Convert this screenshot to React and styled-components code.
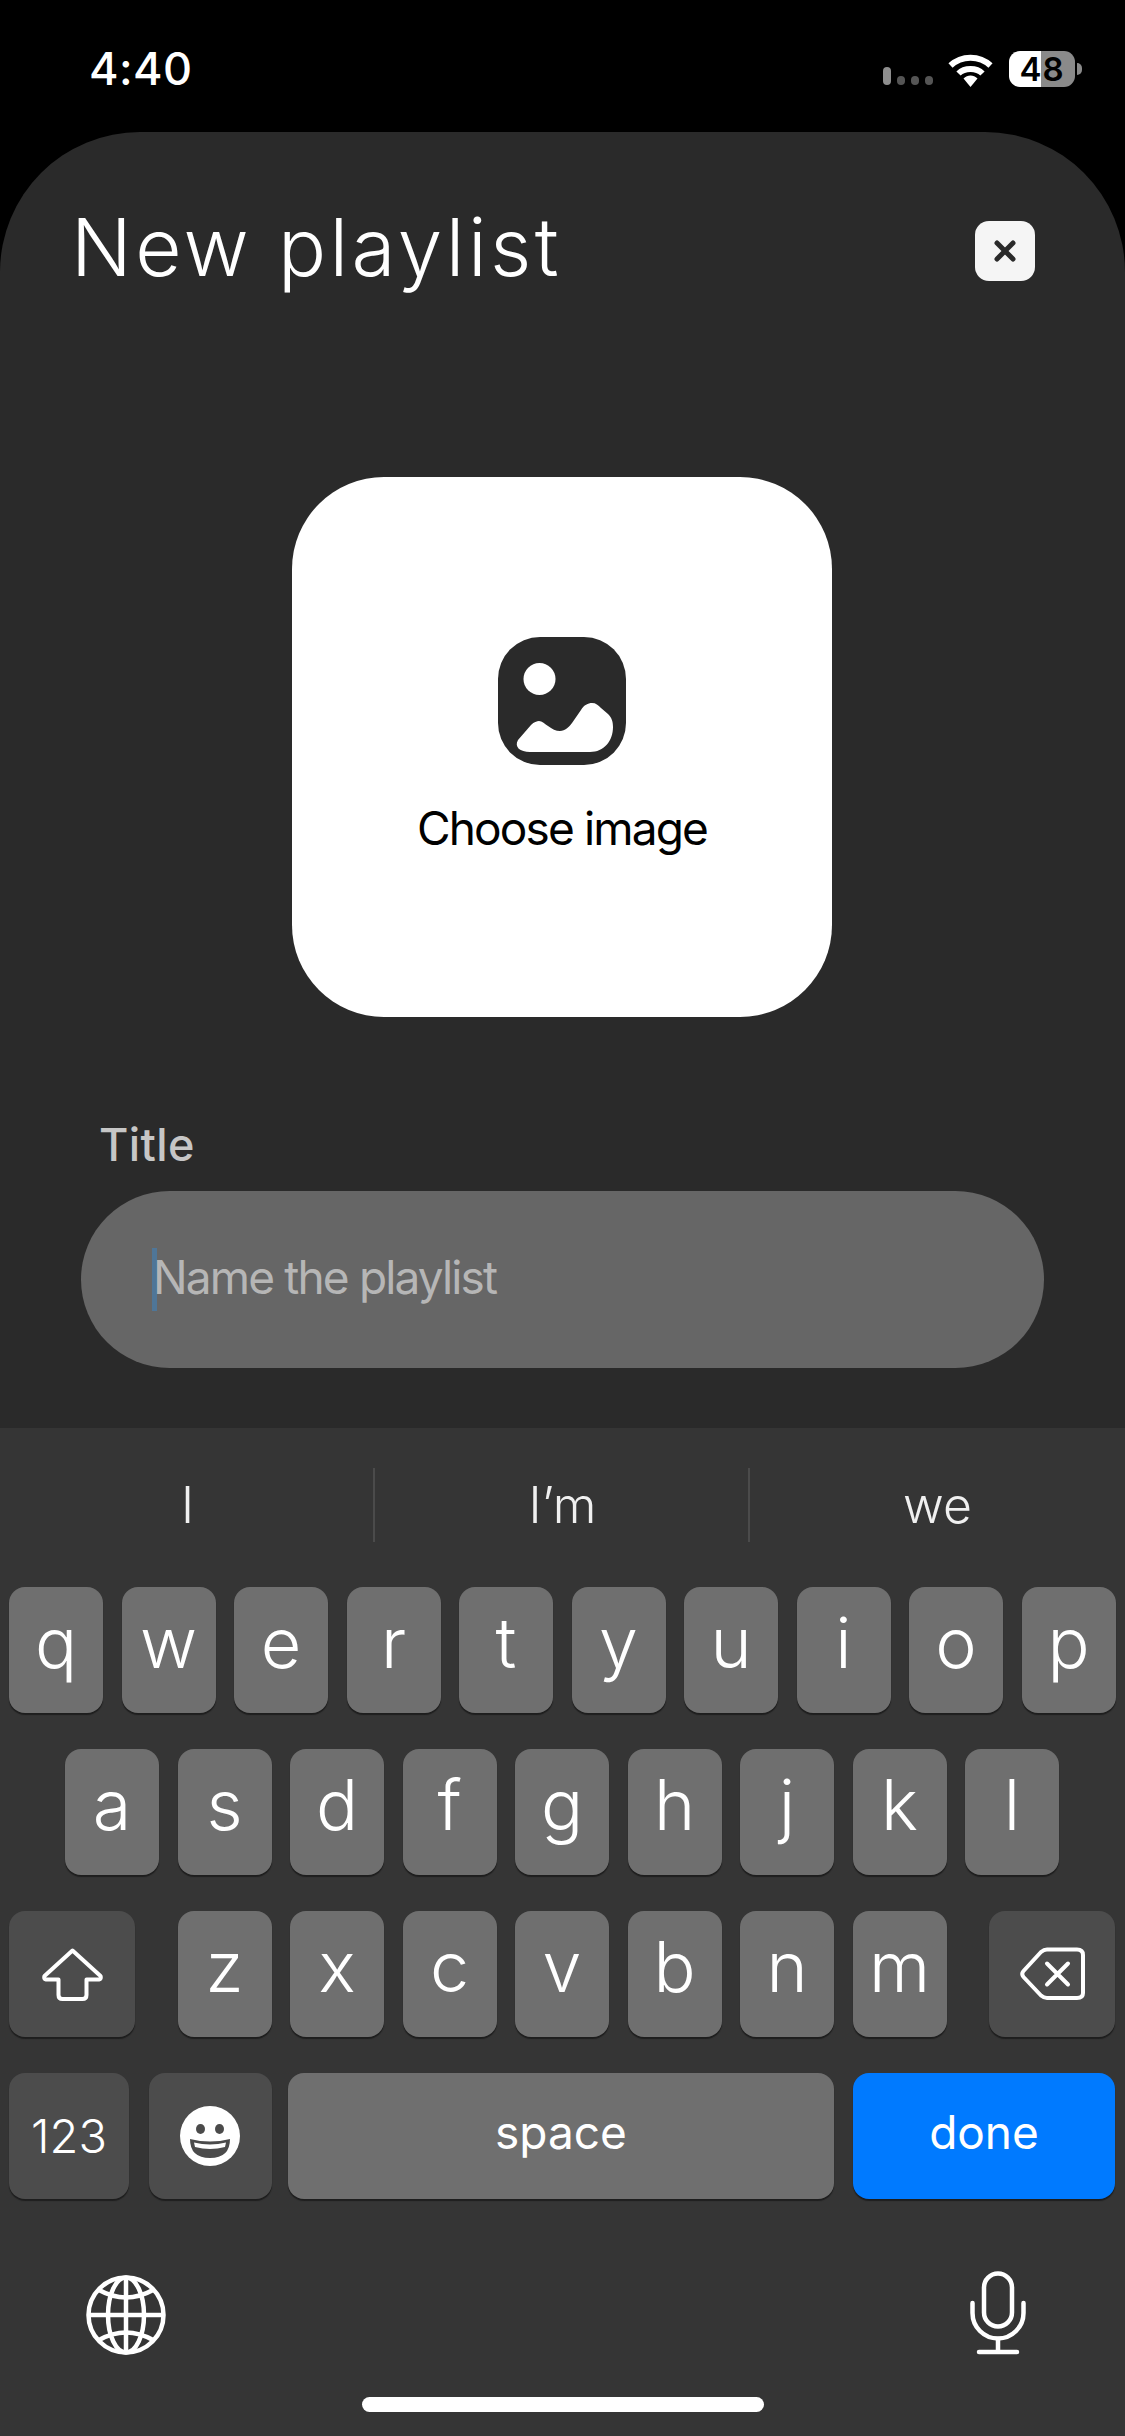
import React from 'react';
import styled, { createGlobalStyle } from 'styled-components';

const GlobalStyle = createGlobalStyle`
  html, body {
    margin: 0;
    padding: 0;
    background: #000;
    font-family: Inter, "Liberation Sans", sans-serif;
  }
  * { box-sizing: border-box; }
`;

const Screen = styled.div`
  width: 1125px;
  height: 2436px;
  display: flex;
  flex-direction: column;
  overflow: hidden;
  background: #000;
`;

const StatusBar = styled.div`
  height: 132px;
  flex: none;
  display: flex;
  justify-content: space-between;
  align-items: flex-start;
  padding: 41px 50px 0 89px;
`;

const Time = styled.div`
  font-size: 45px;
  line-height: 56px;
  font-weight: 500;
  letter-spacing: 0.4px;
  color: #fff;
`;

const StatusIcons = styled.div`
  display: flex;
  align-items: flex-end;
  margin-top: 10px;
`;

const Signal = styled.div`
  display: flex;
  align-items: flex-end;
  gap: 6px;
  margin-right: 15px;
  padding-bottom: 2px;
`;

const SignalBar = styled.span`
  width: 8px;
  height: ${(p) => (p.$on ? 18 : 9)}px;
  border-radius: 4px;
  background: ${(p) => (p.$on ? '#8e8e8e' : '#555')};
`;

const Battery = styled.div`
  width: 66px;
  height: 36px;
  margin-left: 16px;
  border-radius: 11px;
  background: linear-gradient(90deg, #fff 0 48.5%, #8a8a8a 48.5% 100%);
  color: #000;
  font-size: 33px;
  font-weight: 600;
  letter-spacing: 1px;
  line-height: 36px;
  text-align: center;
  position: relative;
  &::after {
    content: '';
    position: absolute;
    right: -7px;
    top: 12px;
    width: 5px;
    height: 12px;
    border-radius: 0 5px 5px 0;
    background: #8a8a8a;
  }
`;

const Sheet = styled.div`
  flex: 1;
  background: #2a2a2a;
  border-radius: 140px 140px 0 0;
`;

const Header = styled.div`
  display: flex;
  justify-content: space-between;
  align-items: flex-start;
  padding: 70px 90px 0 71px;
`;

const Title = styled.h1`
  margin: 0;
  font-size: 80px;
  line-height: 90px;
  font-weight: 300;
  letter-spacing: 3.4px;
  color: #fff;
`;

const CloseButton = styled.div`
  width: 60px;
  height: 60px;
  margin-top: 19px;
  border-radius: 14px;
  background: #f5f5f5;
  display: flex;
  align-items: center;
  justify-content: center;
`;

const ImageCard = styled.div`
  width: 540px;
  height: 540px;
  margin: 185px 0 0 292px;
  padding-top: 160px;
  border-radius: 92px;
  background: #fff;
  display: flex;
  flex-direction: column;
  align-items: center;
`;

const CardLabel = styled.div`
  margin-top: 35px;
  font-size: 46px;
  line-height: 56px;
  letter-spacing: -1.85px;
  color: #000;
`;

const FieldLabel = styled.div`
  margin: 101px 0 0 99px;
  font-size: 45px;
  line-height: 54px;
  font-weight: 500;
  letter-spacing: 0.4px;
  color: #c6c6c6;
`;

const Field = styled.div`
  height: 177px;
  margin: 19px 81px 0;
  padding-left: 71px;
  border-radius: 89px;
  background: #666;
  display: flex;
  align-items: center;
`;

const Caret = styled.span`
  width: 5px;
  height: 63px;
  margin-right: -4px;
  background: #4f7698;
`;

const Placeholder = styled.span`
  font-size: 46px;
  letter-spacing: -1.85px;
  padding-bottom: 6px;
  color: #b6b6b6;
`;

const Keyboard = styled.div`
  height: 1008px;
  flex: none;
  background: #353535;
  display: flex;
  flex-direction: column;
`;

const Suggestions = styled.div`
  height: 159px;
  flex: none;
  display: flex;
  padding-top: 40px;
`;

const Suggestion = styled.div`
  flex: 1;
  height: 74px;
  display: flex;
  align-items: center;
  justify-content: center;
  font-size: 50px;
  font-weight: 300;
  color: #f0f0f0;
  & + & {
    border-left: 2px solid #4b4b4b;
    margin-left: -2px;
  }
`;

const Rows = styled.div`
  display: flex;
  flex-direction: column;
  gap: 36px;
  padding: 0 9px;
`;

const Row = styled.div`
  display: flex;
  gap: ${(p) => p.$gap ?? 18.5}px;
  padding-left: ${(p) => p.$indent || 0}px;
`;

const Key = styled.div`
  width: ${(p) => p.$w || 94}px;
  height: 126px;
  flex: none;
  margin-left: ${(p) => p.$after || 0}px;
  border-radius: 16px;
  background: ${(p) => p.$bg || '#6f6f6f'};
  box-shadow: 0 2px 1px #1e1e1e;
  color: #fff;
  display: flex;
  align-items: center;
  justify-content: center;
`;

const LetterKey = styled(Key)`
  font-size: 70px;
  line-height: 70px;
  font-weight: 300;
  padding-bottom: 15px;
`;

const LabelKey = styled(Key)`
  font-size: ${(p) => p.$size || 46}px;
  line-height: 56px;
  font-weight: ${(p) => p.$weight || 400};
  padding-bottom: ${(p) => p.$lift || 0}px;
`;

const BottomIcons = styled.div`
  display: flex;
  justify-content: space-between;
  align-items: flex-end;
  padding: 72px 99px 0 86px;
`;

const HomeBar = styled.div`
  width: 402px;
  height: 15px;
  margin: 42px auto 0;
  border-radius: 8px;
  background: #fff;
`;

const Wifi = () => (
  <svg width="45" height="33" viewBox="0 0 45 33" fill="none">
    <path d="M2.5 11.5C13.5 1 31.5 1 42.5 11.5" stroke="#fff" strokeWidth="6" />
    <path d="M10.5 19.5C16.5 13.5 28.5 13.5 34.5 19.5" stroke="#fff" strokeWidth="6" />
    <path d="M15.5 24.5C19.5 20.5 25.5 20.5 29.5 24.5L22.5 33Z" fill="#fff" />
  </svg>
);

const CloseIcon = () => (
  <svg width="22" height="22" viewBox="0 0 22 22" fill="none">
    <path d="M3 3L19 19M19 3L3 19" stroke="#2a2a2a" strokeWidth="5" strokeLinecap="round" />
  </svg>
);

const ImageIcon = () => (
  <svg width="128" height="128" viewBox="0 0 128 128">
    <rect width="128" height="128" rx="42" fill="#2a2a2a" />
    <circle cx="41.5" cy="42" r="16" fill="#fff" />
    <path
      d="M20 103L33 88C36 85 39 84 41 84C44 84 47 87 50 89C54 92 58 94 62 94C67 94 71 90 74 86L83 73C86 68 90 66 94 66C98 66 100 68 103 71L110 77C114 81 115 85 115 90C115 104 106 115 92 115L32 115C22 115 16 110 20 103Z"
      fill="#fff"
    />
  </svg>
);

const ShiftIcon = () => (
  <svg width="63" height="53" viewBox="0 0 63 53" fill="none" stroke="#fff" strokeWidth="4" strokeLinejoin="round">
    <path d="M31.5 2.5L3.5 28Q2.5 31 5 31.5L17.5 31.5L17.5 47Q17.5 51 21.5 51L41.5 51Q45.5 51 45.5 47L45.5 31.5L58 31.5Q60.5 31 59.5 28Z" />
  </svg>
);

const BackspaceIcon = () => (
  <svg width="65" height="54" viewBox="0 0 65 54" fill="none" stroke="#fff" strokeWidth="4" strokeLinecap="round" strokeLinejoin="round">
    <path d="M3.5 24L21 5Q24 2.5 27 2.5L57 2.5Q63 2.5 63 8L63 46Q63 51 57 51L27 51Q24 51 21 48.5L3.5 30Q1 27 3.5 24Z" />
    <path d="M27 16.5L48 37.5M48 16.5L27 37.5" />
  </svg>
);

const EmojiIcon = () => (
  <svg width="60" height="60" viewBox="0 0 60 60">
    <circle cx="30" cy="30" r="30" fill="#fff" />
    <ellipse cx="20.5" cy="23" rx="4.5" ry="5" fill="#4b4b4b" />
    <ellipse cx="39.5" cy="23" rx="4.5" ry="5" fill="#4b4b4b" />
    <path d="M10 33Q30 38 50 33Q50 52 30 52Q10 52 10 33Z" fill="#4b4b4b" />
    <path d="M14 36.5Q30 40.5 46 36.5L45 41Q30 45 15 41Z" fill="#fff" />
  </svg>
);

const GlobeIcon = () => (
  <svg width="80" height="80" viewBox="0 0 80 80" fill="none" stroke="#fff" strokeWidth="4.5">
    <circle cx="40" cy="40" r="37.5" />
    <ellipse cx="40" cy="40" rx="18" ry="37.5" />
    <path d="M40 2.5V77.5M2.5 40H77.5" />
    <path d="M13 15Q40 30 67 15M13 65Q40 50 67 65" />
  </svg>
);

const MicIcon = () => (
  <svg width="56" height="84" viewBox="0 0 56 84" fill="none" stroke="#fff" strokeWidth="4.5" strokeLinecap="round">
    <rect x="14" y="2.5" width="28" height="53" rx="14" />
    <path d="M2.5 32V42A25.5 25.5 0 0 0 53.5 42V32" />
    <path d="M28 68V81M9 81H47" />
  </svg>
);

const TOP_ROW = ['q', 'w', 'e', 'r', 't', 'y', 'u', 'i', 'o', 'p'];
const MIDDLE_ROW = ['a', 's', 'd', 'f', 'g', 'h', 'j', 'k', 'l'];
const BOTTOM_ROW = ['z', 'x', 'c', 'v', 'b', 'n', 'm'];

const App = () => (
  <Screen>
    <GlobalStyle />
    <StatusBar>
      <Time>4:40</Time>
      <StatusIcons>
        <Signal>
          <SignalBar $on />
          <SignalBar />
          <SignalBar />
          <SignalBar />
        </Signal>
        <Wifi />
        <Battery>48</Battery>
      </StatusIcons>
    </StatusBar>

    <Sheet>
      <Header>
        <Title>New playlist</Title>
        <CloseButton>
          <CloseIcon />
        </CloseButton>
      </Header>
      <ImageCard>
        <ImageIcon />
        <CardLabel>Choose image</CardLabel>
      </ImageCard>
      <FieldLabel>Title</FieldLabel>
      <Field>
        <Caret />
        <Placeholder>Name the playlist</Placeholder>
      </Field>
    </Sheet>

    <Keyboard>
      <Suggestions>
        <Suggestion>I</Suggestion>
        <Suggestion>I’m</Suggestion>
        <Suggestion>we</Suggestion>
      </Suggestions>
      <Rows>
        <Row>
          {TOP_ROW.map((k) => (
            <LetterKey key={k}>{k}</LetterKey>
          ))}
        </Row>
        <Row $indent={56}>
          {MIDDLE_ROW.map((k) => (
            <LetterKey key={k}>{k}</LetterKey>
          ))}
        </Row>
        <Row>
          <Key $w={126} $bg="#4c4c4c">
            <ShiftIcon />
          </Key>
          <LetterKey $after={24}>z</LetterKey>
          {BOTTOM_ROW.slice(1).map((k) => (
            <LetterKey key={k}>{k}</LetterKey>
          ))}
          <Key $w={126} $bg="#4c4c4c" $after={24}>
            <BackspaceIcon />
          </Key>
        </Row>
        <Row $gap={0}>
          <LabelKey $w={120} $bg="#4c4c4c" $weight={300} $size={47}>123</LabelKey>
          <Key $w={123} $bg="#4c4c4c" $after={19.5}>
            <EmojiIcon />
          </Key>
          <LabelKey $w={546} $after={16.5} $lift={8}>space</LabelKey>
          <LabelKey $w={262} $bg="#007aff" $after={19} $lift={8}>done</LabelKey>
        </Row>
      </Rows>
      <BottomIcons>
        <GlobeIcon />
        <MicIcon />
      </BottomIcons>
      <HomeBar />
    </Keyboard>
  </Screen>
);

export default App;
